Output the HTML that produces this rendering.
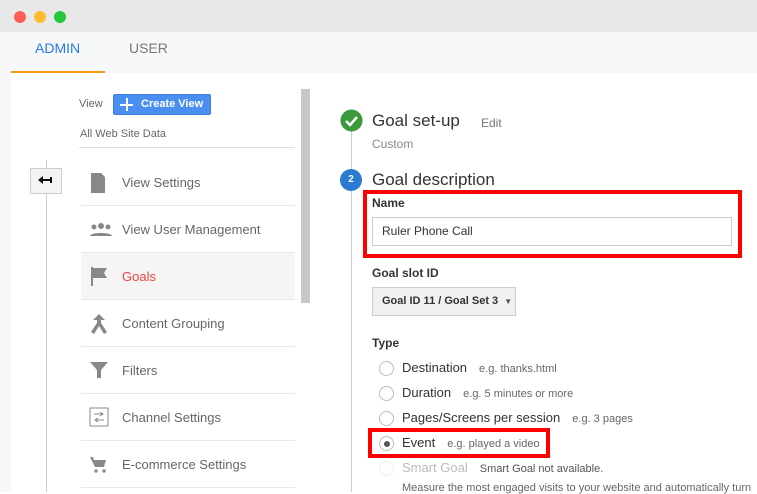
<!DOCTYPE html>
<html><head><style>
*{margin:0;padding:0;box-sizing:border-box}
body{width:757px;height:492px;overflow:hidden;background:#fff;font-family:"Liberation Sans",sans-serif;position:relative}
.a{position:absolute}
.t{color:#666;font-size:13px}
.item{position:absolute;left:81px;width:214px;height:47px;border-bottom:1px solid #e8e8e8}
.item span{position:absolute;left:41px;top:16px;font-size:13px;color:#666}
.item svg{position:absolute;left:8px;top:13px}
.radio{position:absolute;left:379px;width:15px;height:15px;border:1px solid #bbb;border-radius:50%;background:#fff}
.rl{position:absolute;left:402px;font-size:13px;color:#333}
.rh{font-size:11px;color:#666;margin-left:12px}
</style></head><body>
<div class="a" style="left:0;top:0;width:757px;height:32px;background:#e8e8e8"></div>
<div class="a" style="left:14px;top:11px;width:12px;height:12px;border-radius:50%;background:#fd5f57"></div>
<div class="a" style="left:34px;top:11px;width:12px;height:12px;border-radius:50%;background:#fdbb2d"></div>
<div class="a" style="left:54px;top:11px;width:12px;height:12px;border-radius:50%;background:#27c840"></div>
<div class="a" style="left:0;top:32px;width:757px;height:41px;background:#f7f8fa"></div>
<div class="a" style="left:35px;top:40px;font-size:14px;color:#2a7ae2">ADMIN</div>
<div class="a" style="left:129px;top:40px;font-size:14px;color:#777">USER</div>
<div class="a" style="left:11px;top:71px;width:94px;height:2px;background:#f59a17"></div>
<div class="a" style="left:0;top:73px;width:11px;height:419px;background:#f7f8fa"></div>

<div class="a t" style="left:79px;top:98px;font-size:11px">View</div>
<div class="a" style="left:113px;top:94px;width:98px;height:21px;background:#4a8ff0;border:1px solid #3b7fe0;border-radius:2px;color:#fff;font-size:11px;font-weight:bold;line-height:19px;padding-left:27px">Create View</div>
<div class="a" style="left:120px;top:98px;width:13px;height:13px"><div class="a" style="left:6px;top:0;width:2px;height:13px;background:#fff"></div><div class="a" style="left:0;top:6px;width:13px;height:2px;background:#fff"></div></div>
<div class="a t" style="left:80px;top:128px;font-size:11px">All Web Site Data</div>
<div class="a" style="left:79px;top:147px;width:216px;height:1px;background:#ddd"></div>
<div class="a" style="left:46px;top:160px;width:1px;height:332px;background:#ccc"></div>
<div class="a" style="left:30px;top:168px;width:32px;height:26px;background:#f4f4f4;border:1px solid #ccc"></div>
<svg class="a" style="left:37px;top:174px" width="16" height="12" viewBox="0 0 16 12"><path d="M1 6l5-4v3h7V3h2v6h-2V7H6v3z" fill="#111"/></svg>
<div class="a" style="left:301px;top:89px;width:9px;height:214px;background:#c8c8c8"></div>

<div class="item" style="top:159px"><svg width="18" height="22" viewBox="0 0 18 22"><path d="M2 1h10l4 4v16H2z" fill="#888"/></svg><span>View Settings</span></div>
<div class="item" style="top:206px"><svg width="24" height="20" viewBox="0 0 24 20"><circle cx="5" cy="8" r="2.5" fill="#888"/><circle cx="12" cy="7" r="3" fill="#888"/><circle cx="19" cy="8" r="2.5" fill="#888"/><path d="M1 17c0-4 22-4 22 0z" fill="#888"/></svg><span>View User Management</span></div>
<div class="item" style="top:253px;background:#f5f5f5"><svg width="20" height="20" viewBox="0 0 20 20"><path d="M2 1h2v19H2zM4 2h14l-3 5 3 5H4z" fill="#888"/></svg><span style="color:#e8453c">Goals</span></div>
<div class="item" style="top:300px"><svg width="20" height="22" viewBox="0 0 20 22"><path d="M10 1l6 6h-4v3l6 9-3 2-5-8-5 8-3-2 6-9V7H4z" fill="#888"/></svg><span>Content Grouping</span></div>
<div class="item" style="top:347px"><svg width="20" height="20" viewBox="0 0 20 20"><path d="M1 2h18l-7 8v8h-4v-8z" fill="#888"/></svg><span>Filters</span></div>
<div class="item" style="top:394px"><svg width="20" height="20" viewBox="0 0 20 20"><rect x="1" y="1" width="18" height="18" fill="none" stroke="#888"/><path d="M5 7h9M11 5l3 2-3 2M15 13H6M9 11l-3 2 3 2" stroke="#888" fill="none"/></svg><span>Channel Settings</span></div>
<div class="item" style="top:441px"><svg width="20" height="20" viewBox="0 0 20 20"><path d="M1 3h3l1 3h12l-2 7H6z" fill="#888"/><circle cx="7" cy="17" r="1.7" fill="#888"/><circle cx="15" cy="17" r="1.7" fill="#888"/></svg><span>E-commerce Settings</span></div>

<div class="a" style="left:351px;top:130px;width:1px;height:362px;background:#ccc"></div>
<svg class="a" style="left:340px;top:109px" width="23" height="23"><circle cx="11.5" cy="11.5" r="11" fill="#3a9a3a"/><path d="M6 12l4 4 7-8" stroke="#fff" stroke-width="2.5" fill="none"/></svg>
<div class="a" style="left:372px;top:111px;font-size:17px;color:#333">Goal set-up</div>
<div class="a" style="left:481px;top:116px;font-size:12px;color:#777">Edit</div>
<div class="a" style="left:372px;top:137px;font-size:12px;color:#888">Custom</div>
<div class="a" style="left:340px;top:169px;width:22px;height:22px;border-radius:50%;background:#2a7ad0;color:#fff;font-size:10px;font-weight:bold;text-align:center;line-height:22px">2</div>
<div class="a" style="left:372px;top:170px;font-size:17px;color:#333">Goal description</div>
<div class="a" style="left:363px;top:190px;width:379px;height:68px;border:4px solid #f00"></div>
<div class="a" style="left:372px;top:196px;font-size:12px;font-weight:bold;color:#333">Name</div>
<div class="a" style="left:372px;top:217px;width:360px;height:29px;border:1px solid #ccc;font-size:12px;color:#333;line-height:27px;padding-left:9px">Ruler Phone Call</div>
<div class="a" style="left:372px;top:266px;font-size:12px;font-weight:bold;color:#333">Goal slot ID</div>
<div class="a" style="left:372px;top:287px;width:144px;height:29px;border:1px solid #ccc;background:#f1f1f1;font-size:11px;font-weight:bold;color:#333;line-height:27px;padding-left:9px">Goal ID 11 / Goal Set 3 <span style="font-size:8px;color:#555;margin-left:3px">&#9660;</span></div>
<div class="a" style="left:372px;top:336px;font-size:12px;font-weight:bold;color:#333">Type</div>
<div class="radio" style="top:361px"></div><div class="rl" style="top:360px">Destination<span class="rh">e.g. thanks.html</span></div>
<div class="radio" style="top:386px"></div><div class="rl" style="top:385px">Duration<span class="rh">e.g. 5 minutes or more</span></div>
<div class="radio" style="top:411px"></div><div class="rl" style="top:410px">Pages/Screens per session<span class="rh">e.g. 3 pages</span></div>
<div class="a" style="left:368px;top:428px;width:182px;height:30px;border:4px solid #f00"></div>
<div class="radio" style="top:436px"></div><div class="a" style="left:384px;top:441px;width:6px;height:6px;border-radius:50%;background:#555"></div>
<div class="rl" style="top:435px">Event<span class="rh">e.g. played a video</span></div>
<div class="radio" style="top:461px;border-color:#eee"></div><div class="rl" style="top:460px;color:#bbb">Smart Goal<span class="rh" style="color:#555">Smart Goal not available.</span></div>
<div class="a" style="left:402px;top:482px;font-size:11px;color:#666;white-space:nowrap">Measure the most engaged visits to your website and automatically turn</div>
</body></html>
